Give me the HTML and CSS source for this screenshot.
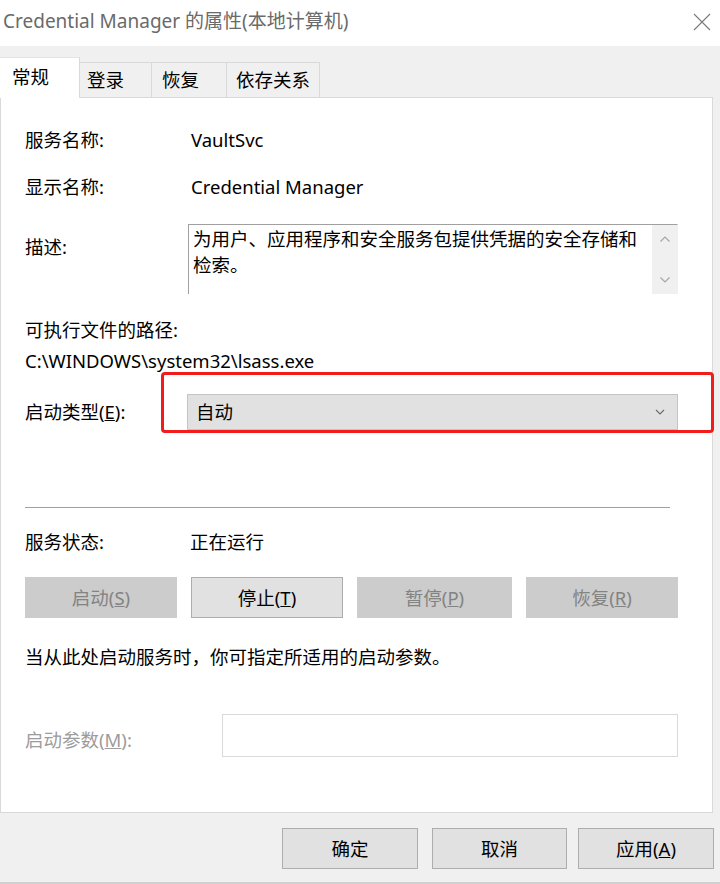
FILE: index.html
```html
<!DOCTYPE html>
<html lang="zh-CN">
<head>
<meta charset="utf-8">
<title>Credential Manager 的属性(本地计算机)</title>
<link rel="stylesheet" href="styles.css">
</head>
<body>
<div class="window">
  <div class="titlebar">
    <span class="title">Credential Manager 的属性(本地计算机)</span>
    <svg class="close" width="18" height="18" viewBox="0 0 18 18"><path d="M1 1 L17 17 M17 1 L1 17" stroke="#7a7a7a" stroke-width="1.1" fill="none"/></svg>
  </div>
  <div class="tabs">
    <div class="tab active t1">常规</div>
    <div class="tab t2">登录</div>
    <div class="tab t3">恢复</div>
    <div class="tab t4">依存关系</div>
  </div>
  <div class="panel">
    <div class="row r1"><span class="label">服务名称:</span><span class="value">VaultSvc</span></div>
    <div class="row r2"><span class="label">显示名称:</span><span class="value">Credential Manager</span></div>
    <div class="row r3">
      <span class="label desc-label">描述:</span>
      <div class="descbox">
        <div class="desctext">为用户、应用程序和安全服务包提供凭据的安全存储和检索。</div>
        <div class="vscroll">
          <svg width="12" height="8" viewBox="0 0 12 8"><path d="M1.5 6.5 L6 2 L10.5 6.5" stroke="#a6a6a6" stroke-width="1.2" fill="none"/></svg>
          <svg width="12" height="8" viewBox="0 0 12 8"><path d="M1.5 1.5 L6 6 L10.5 1.5" stroke="#a6a6a6" stroke-width="1.2" fill="none"/></svg>
        </div>
      </div>
    </div>
    <div class="row r4"><span class="label">可执行文件的路径:</span></div>
    <div class="row r5"><span class="label">C:\WINDOWS\system32\lsass.exe</span></div>
    <div class="row r6">
      <span class="label combo-label">启动类型(<u>E</u>):</span>
      <div class="combo">
        <span>自动</span>
        <svg width="10" height="6" viewBox="0 0 10 6"><path d="M1 1 L5 5 L9 1" stroke="#6a6a6a" stroke-width="1.1" fill="none"/></svg>
      </div>
    </div>
    <div class="sep"></div>
    <div class="row r7"><span class="label">服务状态:</span><span class="value status">正在运行</span></div>
    <div class="btnrow">
      <div class="btn disabled">启动(<u>S</u>)</div>
      <div class="btn">停止(<u>T</u>)</div>
      <div class="btn disabled">暂停(<u>P</u>)</div>
      <div class="btn disabled">恢复(<u>R</u>)</div>
    </div>
    <div class="row r8"><span class="label">当从此处启动服务时，你可指定所适用的启动参数。</span></div>
    <div class="row r9">
      <span class="label param-label">启动参数(<u>M</u>):</span>
      <div class="paraminput"></div>
    </div>
  </div>
  <div class="footer">
    <div class="fbtn b-ok">确定</div>
    <div class="fbtn b-cancel">取消</div>
    <div class="fbtn b-apply">应用(<u>A</u>)</div>
  </div>
  <div class="annot"></div>
</div>
</body>
</html>
```
FILE: styles.css
```css
* { box-sizing: border-box; }
html, body { margin: 0; padding: 0; }
body {
  width: 720px;
  height: 884px;
  overflow: hidden;
  background: #f0f0f0;
  font-family: "Noto Sans", "Noto Sans CJK SC", sans-serif;
  font-size: 18.5px;
  color: #000;
}
.window {
  position: relative;
  width: 720px;
  height: 884px;
  display: flex;
  flex-direction: column;
}
.titlebar {
  height: 46px;
  background: #fff;
  display: flex;
  align-items: center;
  justify-content: space-between;
  padding: 0 9px 4px 3px;
}
.title {
  font-size: 19px;
  color: #6a6a6a;
  line-height: 24px;
}
.close { display: block; margin-top: 2px; }

.tabs {
  height: 51px;
  display: flex;
  align-items: flex-end;
}
.tab {
  height: 35px;
  line-height: 33px;
  border: 1px solid #d9d9d9;
  border-bottom: none;
  border-left: none;
  background: #f0f0f0;
  font-size: 18.5px;
  padding-left: 8px;
}
.tab.active {
  position: relative;
  z-index: 1;
  height: 41px;
  margin-bottom: -1px;
  background: #fff;
  line-height: 38px;
  padding-left: 12px;
  border-top: 1px solid #e4e4e4;
  border-right: 1px solid #d9d9d9;
}
.t1 { width: 80px; }
.t2 { width: 72px; padding-left: 7px; }
.t3 { width: 75px; padding-left: 10px; }
.t4 { width: 93px; padding-left: 9px; }

.panel {
  width: 713px;
  height: 716px;
  background: #fff;
  border: 1px solid #d9d9d9;
  padding-left: 24px;
  display: flex;
  flex-direction: column;
}
.row {
  display: flex;
  align-items: center;
  height: 30px;
  line-height: 30px;
  white-space: nowrap;
}
.label { width: 166px; flex: none; }
.r4 .label, .r5 .label, .r8 .label { width: auto; }
.r1 { margin-top: 27px; }
.r2 { margin-top: 17px; }
.r3 { margin-top: 22px; height: 70px; align-items: flex-start; }
.desc-label { width: 163px; margin-top: 8px; }
.descbox {
  width: 490px;
  height: 70px;
  border-top: 1px solid #a0a0a0;
  border-left: 1px solid #a0a0a0;
  border-right: 1px solid #f0f0f0;
  display: flex;
  justify-content: space-between;
}
.desctext {
  width: 458px;
  padding: 1px 0 0 4px;
  line-height: 26px;
  white-space: normal;
  word-break: break-all;
}
.vscroll {
  width: 25px;
  height: 69px;
  background: #f0f0f0;
  display: flex;
  flex-direction: column;
  align-items: center;
  justify-content: space-between;
  padding: 10px 0 10px;
}
.vscroll svg { display: block; }
.r4 { margin-top: 21px; }
.r5 { margin-top: 1px; }
.r6 { margin-top: 18px; height: 36px; }
.combo-label { width: 162px; }
.combo {
  width: 491px;
  height: 36px;
  background: #e1e1e1;
  border: 1px solid #c4c4c4;
  display: flex;
  align-items: center;
  justify-content: space-between;
  padding: 0 12px 0 8px;
}
.combo svg { display: block; }
.sep {
  margin-top: 77px;
  width: 645px;
  height: 1px;
  background: #a0a0a0;
}
.r7 { margin-top: 19px; }
.status { margin-left: -1px; }
.btnrow {
  margin-top: 20px;
  display: grid;
  grid-template-columns: 152px 152px 155px 152px;
  column-gap: 14px;
}
.btn {
  height: 41px;
  line-height: 39px;
  text-align: center;
  background: #e1e1e1;
  border: 1px solid #adadad;
}
.btn.disabled {
  background: #cccccc;
  border-color: #cccccc;
  color: #838383;
}
.r8 { margin-top: 24px; }
.r9 { margin-top: 42px; height: 43px; }
.param-label { width: 197px; color: #9c9c9c; padding-top: 9px; }
.paraminput {
  width: 456px;
  height: 43px;
  border: 1px solid #d9d9d9;
  background: #fff;
}

.footer {
  flex: 1;
  display: flex;
  justify-content: flex-end;
  align-items: flex-start;
  padding: 15px 6px 0 0;
  border-bottom: 2px solid #cfcfcf;
}
.fbtn {
  height: 41px;
  line-height: 39px;
  text-align: center;
  background: #e1e1e1;
  border: 1px solid #adadad;
}
.b-ok { width: 136px; }
.b-cancel { width: 135px; margin-left: 14px; }
.b-apply { width: 136px; margin-left: 11px; }

.annot {
  position: absolute;
  left: 161px;
  top: 372px;
  width: 553px;
  height: 61px;
  border: 3px solid #f21c1c;
  border-radius: 4px;
}
```
